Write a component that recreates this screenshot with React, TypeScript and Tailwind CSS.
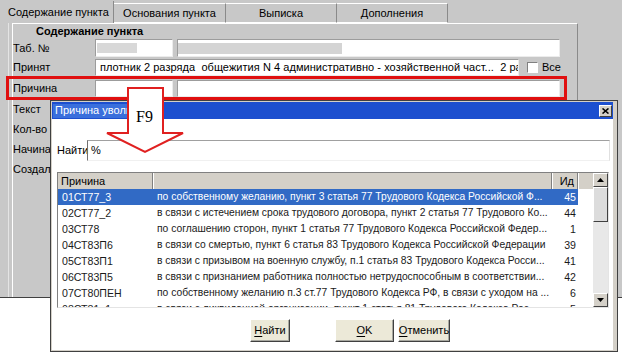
import React from 'react';

const ROWS: [string, string, string][] = [
  ['01СТ77_3', 'по собственному желанию, пункт 3 статья 77 Трудового Кодекса Российской Ф...', '45'],
  ['02СТ77_2', 'в связи с истечением срока трудового договора, пункт 2 статья 77 Трудового Ко...', '44'],
  ['03СТ78', 'по соглашению сторон, пункт 1 статья 77 Трудового Кодекса Российской Федер...', '1'],
  ['04СТ83П6', 'в связи со смертью, пункт 6 статья 83 Трудового Кодекса Российской Федерации', '39'],
  ['05СТ83П1', 'в связи с призывом на военную службу, п.1 статья 83 Трудового Кодекса Росси...', '41'],
  ['06СТ83П5', 'в связи с признанием работника полностью нетрудоспособным в соответствии...', '42'],
  ['07СТ80ПЕН', 'по собственному желанию п.3 ст.77 Трудового Кодекса РФ, в связи с уходом на ...', '6'],
  ['08СТ81_1', 'в связи с ликвидацией организации, пункт 1 статья 81 Трудового Кодекса Рос...', '5'],
];

const field = 'h-full bg-white border border-t-[#9c9c9c] border-l-[#9c9c9c] border-b-[#ececec] border-r-[#ececec]';
const raised = 'border border-t-white border-l-white border-b-[#404040] border-r-[#404040] bg-[#d4d0c8]';

function Tabs() {
  return (
    <div className="flex h-[23px] shrink-0 items-end">
      <div className="flex h-[22px] w-[114px] items-center border-r border-[#8a8a8a] pl-[8px]">Содержание пункта</div>
      <div className="flex h-[20px] w-[112px] items-center justify-center border-t border-r border-t-white border-r-[#8a8a8a] border-b border-b-white">Основания пункта</div>
      <div className="flex h-[20px] w-[111px] items-center justify-center border-t border-r border-t-white border-r-[#8a8a8a] border-b border-b-white">Выписка</div>
      <div className="flex h-[20px] w-[111px] items-center justify-center border-t border-r border-t-white border-r-[#8a8a8a] border-b border-b-white">Дополнения</div>
      <div className="h-px flex-1" />
    </div>
  );
}

function MainWindow() {
  return (
    <div className="flex h-[298px] flex-col border-b border-[#404040] bg-[#c8c8c8]">
      <Tabs />
      <div className="flex flex-1 pl-[8px] pr-[44px]">
        <div className="flex-1 border-l border-[#e4e4e4] pl-[3px]">
          <div className="h-full border-l border-t border-r border-l-white border-t-white border-r-[#8a8a8a]">
            <div className="h-[15px] pl-[23px] font-bold leading-[15px]">Содержание пункта</div>

            <div className="flex h-[18px] items-center">
              <div className="w-[82px]">Таб. №</div>
              <div className={`${field} flex w-[78px] items-center pl-[1px]`}>
                <div className="h-[10px] w-[40px] bg-[#d8d8d8]" />
              </div>
              <div className={`${field} ml-[4px] flex w-[383px] items-center`}>
                <div className="h-[11px] w-[164px] bg-[#d4d4d4]" />
              </div>
            </div>

            <div className="mt-[2px] flex h-[17px] items-center">
              <div className="w-[82px]">Принят</div>
              <div className={`${field} flex w-[424px] items-center overflow-hidden whitespace-pre pl-[4px] tracking-[0.05px]`}>
                плотник 2 разряда  общежития N 4 административно - хозяйственной част...  2 разряда
              </div>
              <div className="ml-[8px] h-[11px] w-[11px] border border-t-[#808080] border-l-[#808080] border-b-white border-r-white bg-white" />
              <div className="ml-[4px]">Все</div>
            </div>

            <div className="-ml-[7px] mr-[10px] flex h-[24px] border-[3px] border-[#e01010] pl-[4px] pt-px">
              <div className="flex w-[82px] items-center">Причина</div>
              <div className={`${field} h-[17px] w-[78px]`} />
              <div className={`${field} ml-[4px] h-[17px] w-[383px]`} />
            </div>

            <div className="flex h-[19px] items-center">Текст</div>
            <div className="flex h-[20px] items-center">Кол-во</div>
            <div className="flex h-[20px] items-center">Начина</div>
            <div className="flex h-[20px] items-center">Создал</div>
          </div>
        </div>
      </div>
    </div>
  );
}

function Btn({ first, rest, w }: { first: string; rest: string; w: string }) {
  return (
    <div className={`flex h-[23px] items-center justify-center border border-t-white border-l-white border-b-[#404040] border-r-[#404040] bg-[#ece9d8] shadow-[inset_-1px_-1px_0_#a8a8a0] ${w}`}>
      <span className="underline underline-offset-2">{first}</span>
      {rest}
    </div>
  );
}

function Grid() {
  return (
    <div className="mt-[11px] flex h-[136px] border border-t-[#808080] border-l-[#808080] border-b-[#e4e4e4] border-r-[#e4e4e4]">
      <div className="flex min-w-0 flex-1 flex-col overflow-hidden">
        <div className="flex h-[16px] shrink-0 bg-[#d4d0c8]">
          <div className="flex w-[95px] items-center border-r border-r-[#808080] pl-[3px]">Причина</div>
          <div className="w-[399px] border-l border-r border-l-white border-r-[#808080]" />
          <div className="flex w-[26px] items-center justify-end border-l border-r border-l-white border-r-[#808080] pr-[3px]">Ид</div>
          <div className="flex-1 border-l border-white" />
        </div>
        {ROWS.map(([code, text, id], i) => (
          <div key={code} className="flex h-[16px] shrink-0 text-[10.3px]">
            <div className={`flex ${i === 0 ? 'bg-[#316ac5] text-white' : 'text-[#1a1a1a]'}`}>
              <div className="flex w-[95px] items-center pl-[4px] text-[10.6px]">{code}</div>
              <div className="flex w-[399px] items-center overflow-hidden whitespace-nowrap pl-[4px]">{text}</div>
              <div className="flex w-[26px] items-center justify-end pr-[2px] text-[10.6px]">{id}</div>
            </div>
          </div>
        ))}
      </div>
      <div className="flex w-[15px] flex-col bg-[#e8e8e8]">
        <div className={`${raised} flex h-[14px] items-center justify-center`}>
          <svg width="7" height="4" viewBox="0 0 7 4"><path d="M3.5 0 L7 4 L0 4 Z" fill="#000" /></svg>
        </div>
        <div className={`${raised} h-[35px] bg-[#dcdcdc]`} />
        <div className="flex-1" />
        <div className={`${raised} flex h-[14px] items-center justify-center`}>
          <svg width="7" height="4" viewBox="0 0 7 4"><path d="M0 0 L7 0 L3.5 4 Z" fill="#000" /></svg>
        </div>
      </div>
    </div>
  );
}

function Dialog() {
  return (
    <div className="absolute left-[50px] top-[100px] flex h-[252px] w-[568px] flex-col border border-[#404040] bg-[#d4d0c8] pb-px pl-px pr-[4px] pt-px">
      <div className="flex h-[17px] shrink-0 items-center bg-[#1c4fcf]">
        <span className="ml-px flex h-[14px] items-center bg-[#3a6fdc] px-[2px] text-white">Причина увольнения</span>
        <div className={`${raised} ml-auto mr-px flex h-[12px] w-[13px] items-center justify-center`}>
          <svg width="7" height="6" viewBox="0 0 7 6"><path d="M0.5 0.5 L6.5 5.5 M6.5 0.5 L0.5 5.5" stroke="#000" strokeWidth="1.6" /></svg>
        </div>
      </div>
      <div className="flex flex-1 flex-col bg-white pl-[5px] pr-[4px]">
        <div className="mt-[21px] flex h-[21px] items-center">
          <div className="w-[30px]">Найти</div>
          <div className="-mr-px flex h-full flex-1 items-center border border-t-[#a0a0a0] border-l-[#707070] border-b-[#f0f0f0] border-r-[#e0e0e0] pl-[3px]">%</div>
        </div>
        <Grid />
        <div className="mt-[11px] flex">
          <div className="ml-[193px]"><Btn first="Н" rest="айти" w="w-[40px]" /></div>
          <div className="ml-[45px]"><Btn first="O" rest="K" w="w-[59px]" /></div>
          <div className="ml-[4px]"><Btn first="О" rest="тменить" w="w-[52px]" /></div>
        </div>
      </div>
    </div>
  );
}

function Arrow() {
  return (
    <>
      <svg className="absolute left-[105px] top-[86px]" width="81" height="70" viewBox="0 0 81 70">
        <polygon points="23,2 58,2 58,47 78,47 40,66 2,47 23,47" fill="#fff" stroke="#e02020" strokeWidth="2" />
      </svg>
      <span className="absolute left-[136px] top-[109px] font-['Liberation_Serif',serif] text-[16px] leading-none text-black">F9</span>
    </>
  );
}

export default function App() {
  return (
    <div className="relative h-[353px] w-[622px] overflow-hidden bg-white font-['Liberation_Sans',Arial,sans-serif] text-[11px] leading-none text-black">
      <MainWindow />
      <Dialog />
      <Arrow />
    </div>
  );
}
